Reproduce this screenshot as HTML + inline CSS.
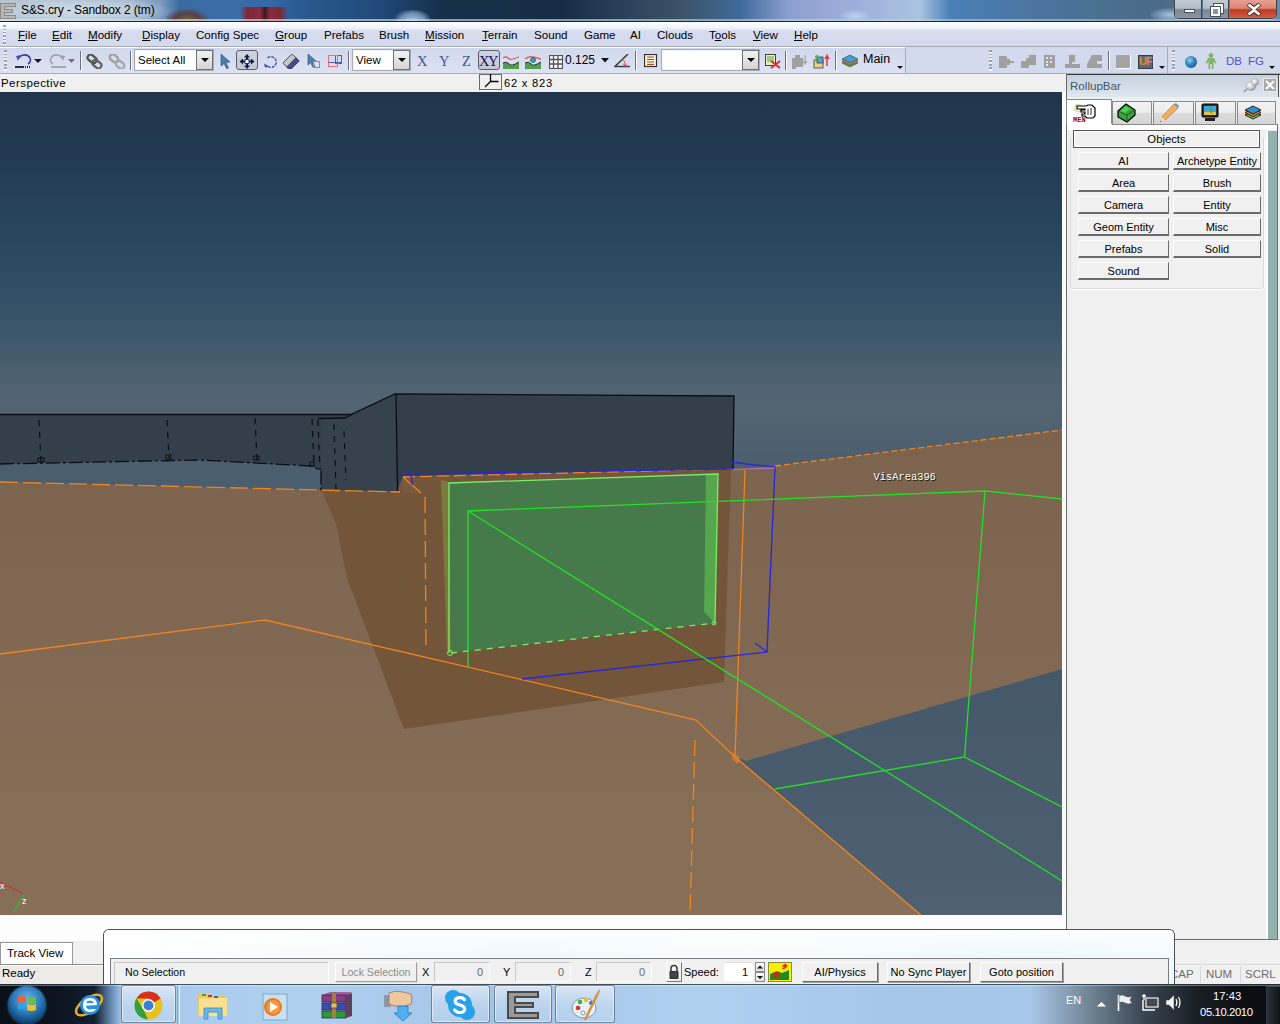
<!DOCTYPE html>
<html><head><meta charset="utf-8">
<style>
*{margin:0;padding:0;box-sizing:border-box}
html,body{width:1280px;height:1024px;overflow:hidden;background:#f0f0f0;font-family:"Liberation Sans",sans-serif;font-size:12px;color:#000}
.a{position:absolute}
#title{left:0;top:0;width:1280px;height:22px;background:linear-gradient(90deg,#b8c6d2 0,#b0c2d2 60px,#a0b6cc 130px,#7c9cc0 160px,#3a6aa0 180px,#3b6ca8 235px,#3568a4 270px,#2a5a90 300px,#1f4a78 380px,#16304a 440px,#162c44 560px,#2a4058 620px,#3c5268 680px,#3e6a9a 740px,#8ea0d0 790px,#a0b0dc 860px,#a8c4e0 920px,#4a80b8 950px,#4a78a8 1000px,#4a7090 1100px,#4a6a88 1160px,#6a8aa8 1280px)}
#menubar{left:0;top:22px;width:1280px;height:25px;background:linear-gradient(#fcfdfe 0,#f0f3f9 6px,#d6dcee 9px,#d4daed 24px);border-bottom:1px solid #a8acb8}
#menubar span{position:absolute;top:6px;font-size:11.6px;color:#000}
#menubar u{text-decoration:underline;text-underline-offset:1px}
.sep{top:4px;width:1px;height:19px;background:#6a6e80;box-shadow:1px 0 0 #fff}
.combo{top:2px;height:22px;background:#fff;border:1px solid #a8acb8;box-shadow:inset 0 0 0 1px #f4f4f4}
.combo span{position:absolute;top:4px;font-size:11.5px;color:#000}
.dd{position:absolute;right:0;top:0;width:17px;height:20px;background:linear-gradient(#f2f2f2,#d4d4d4);border:1px solid #707070}
.dd:after{content:"";position:absolute;left:4px;top:7px;border-left:4px solid transparent;border-right:4px solid transparent;border-top:4px solid #000}
.pressed{top:3px;height:20px;border:1px solid #5a5e68;border-radius:3px;background:linear-gradient(#d0d4de,#c4c8d4)}
.rb{height:18px;background:#f0f0f0;border-top:1px solid #fff;border-left:1px solid #fff;border-right:1px solid #6a6a6a;border-bottom:2px solid #6a6a6a;text-align:center;font-size:11px;line-height:16px;color:#000;white-space:nowrap;overflow:hidden}
.tabi{top:27px;height:24px;border:1px solid #8a8a8a;border-bottom:none;background:linear-gradient(#f2f2f2 0,#ececec 45%,#dcdcdc 50%,#d4d4d4 100%)}
.fld{top:962px;height:20px;border:1px solid #c8c8c8;border-right-color:#fff;border-bottom-color:#fff;background:#f0f0f0;text-align:right;padding-right:6px;font-size:11px;line-height:18px;color:#6d6d6d}
.sb{top:962px;height:20px;background:#f0f0f0;border:1px solid #fff;border-right-color:#6a6a6a;border-bottom-color:#6a6a6a;box-shadow:1px 1px 0 #a0a0a0;text-align:center;font-size:11px;line-height:18px;color:#000;white-space:nowrap}
.tbb{top:1px;height:38px;border:1px solid rgba(40,60,90,.55);border-radius:3px;background:linear-gradient(rgba(255,255,255,.55),rgba(255,255,255,.25) 50%,rgba(255,255,255,.15));box-shadow:inset 0 0 0 1px rgba(255,255,255,.5)}
.grip{width:3px;background:repeating-linear-gradient(180deg,#9096a8 0,#9096a8 1.5px,#f4f6fa 1.5px,#f4f6fa 3.5px);opacity:.85}
#toolbar{left:0;top:47px;width:1280px;height:27px;background:#d4daee;border-bottom:1px solid #a7aab8}
#persp{left:0;top:74px;width:1066px;height:18px;background:#f0f0f0}
#vp{left:0;top:92px;width:1062px;height:823px;overflow:hidden}
#below{left:0;top:915px;width:1066px;height:27px;background:#fdfdfd}
#rollup{left:1066px;top:74px;width:214px;height:867px;background:#f0f0f0}
#status{left:0;top:964px;width:1280px;height:20px;background:#ede9e6}
#taskbar{left:0;top:984px;width:1280px;height:40px;background:#abcbec}
</style></head><body>
<div id="title" class="a">
<div class="a" style="left:166px;top:9px;width:42px;height:13px;border-radius:50% 50% 0 0;background:radial-gradient(ellipse at 50% 100%,#7a7040 0,#5a4040 45%,rgba(60,90,140,0) 80%)"></div>
<div class="a" style="left:240px;top:7px;width:48px;height:15px;background:linear-gradient(90deg,rgba(140,40,60,0),#7c2838 15%,#8a2c3c 42%,#3a1828 52%,#8a2c3c 62%,#7c2838 85%,rgba(140,40,60,0))"></div>
<div class="a" style="left:395px;top:10px;width:35px;height:12px;border-radius:50% 50% 0 0;background:radial-gradient(ellipse at 50% 100%,#b0c8e8 0,#7090b8 50%,rgba(40,70,110,0) 80%)"></div>
<div class="a" style="left:840px;top:10px;width:30px;height:12px;border-radius:50%;background:radial-gradient(ellipse,#b8d4ee 0,rgba(160,176,220,0) 80%)"></div>
<div class="a" style="left:1150px;top:8px;width:40px;height:14px;border-radius:50%;background:radial-gradient(ellipse,#a8c4dc 0,rgba(74,106,136,0) 80%)"></div>
<div class="a" style="left:0;top:19px;width:1280px;height:2px;background:linear-gradient(90deg,rgba(220,230,240,.7),rgba(180,200,220,.5))"></div>
<div class="a" style="left:0;top:21px;width:1280px;height:1px;background:#1c2430"></div>
<div class="a" style="left:0;top:0;width:175px;height:20px;background:radial-gradient(ellipse 90px 14px at 85px 11px,rgba(225,232,240,.7) 0,rgba(215,225,235,.45) 60%,rgba(200,215,230,0) 100%)"></div>
<svg class="a" style="left:0;top:2px" width="17" height="18" viewBox="0 0 17 18"><path d="M0 1H16V5H5V7H13V11H5V13H16V17H0Z" fill="#8a8a88"/><path d="M1 2H15V4H4V8H12V10H4V14H15V16H1Z" fill="#b8b8b4"/></svg>
<div class="a" style="left:21px;top:3px;font-size:12px;color:#000;letter-spacing:-0.1px">S&amp;S.cry - Sandbox 2 (tm)</div>
<div class="a" style="left:1174px;top:0;width:103px;height:19px;border:1px solid #3c4450;border-top:none;border-radius:0 0 5px 5px;overflow:hidden;box-shadow:0 1px 0 rgba(255,255,255,.4)">
 <div class="a" style="left:0;top:0;width:27px;height:18px;background:linear-gradient(#c2cad4 0,#b4bec8 45%,#7c8896 55%,#8a96a4 100%);border-right:1px solid #3c4450"></div>
 <div class="a" style="left:28px;top:0;width:26px;height:18px;background:linear-gradient(#c2cad4 0,#b4bec8 45%,#7c8896 55%,#8a96a4 100%);border-right:1px solid #3c4450"></div>
 <div class="a" style="left:55px;top:0;width:48px;height:18px;background:linear-gradient(#e8a090 0,#d88878 45%,#c03820 55%,#d06040 100%)"></div>
 <div class="a" style="left:9px;top:9px;width:11px;height:4px;background:#fff;border:1px solid #4a5260"></div>
 <div class="a" style="left:39px;top:4px;width:9px;height:9px;border:2px solid #fff;outline:1px solid #4a5260"></div>
 <div class="a" style="left:36px;top:7px;width:9px;height:9px;border:2px solid #fff;outline:1px solid #4a5260;background:#8a96a4"></div>
 <svg class="a" style="left:71px;top:3px" width="16" height="13" viewBox="0 0 16 13"><path d="M2 1L8 5.5L14 1M2 12L8 7.5L14 12" stroke="#4a3030" stroke-width="4.5" fill="none"/><path d="M2.5 1.5L8 5.8L13.5 1.5M2.5 11.5L8 7.2L13.5 11.5" stroke="#fff" stroke-width="2.6" fill="none"/></svg>
</div>
</div>
<div id="menubar" class="a"><div class="a grip" style="left:3px;top:3px;height:20px"></div><span style="left:18px"><u>F</u>ile</span><span style="left:52px"><u>E</u>dit</span><span style="left:88px"><u>M</u>odify</span><span style="left:142px"><u>D</u>isplay</span><span style="left:196px">Config Spec</span><span style="left:275px"><u>G</u>roup</span><span style="left:324px">Prefabs</span><span style="left:379px">Brush</span><span style="left:425px"><u>M</u>ission</span><span style="left:482px"><u>T</u>errain</span><span style="left:534px">Sound</span><span style="left:584px">Game</span><span style="left:630px">AI</span><span style="left:657px">Clouds</span><span style="left:709px">T<u>o</u>ols</span><span style="left:753px"><u>V</u>iew</span><span style="left:794px"><u>H</u>elp</span></div>
<div id="toolbar" class="a">
<div class="a" style="left:0;top:0;width:906px;height:26px;border-top:1px solid #fff;border-right:1px solid #a8acb8;background:linear-gradient(#d2d8ec,#dde2f3)"></div>
<div class="a grip" style="left:4px;top:3px;height:21px"></div>
<div class="a grip" style="left:989px;top:3px;height:21px"></div>
<div class="a" style="left:1167px;top:0;width:1px;height:26px;background:#a8acb8"></div>
<div class="a grip" style="left:1172px;top:3px;height:21px"></div>
<!-- undo/redo -->
<svg class="a" style="left:15px;top:6px" width="62" height="15" viewBox="0 0 62 15">
 <path d="M4 5 A6 5 0 1 1 13 11" stroke="#3838a0" stroke-width="1.6" fill="none" stroke-dasharray="20 1.5"/>
 <path d="M1 3 L6 2 L3 8Z" fill="#4a4ab8"/>
 <rect x="0" y="13" width="9" height="2" fill="#303030"/><rect x="10" y="13" width="1" height="2" fill="#303030"/><rect x="12" y="13" width="1" height="2" fill="#303030"/><rect x="14" y="13" width="1" height="2" fill="#303030"/>
 <path d="M19 6h8l-4 4z" fill="#1a1a1a"/>
 <path d="M47 5 A6 5 0 1 0 38 11" stroke="#a0a0a8" stroke-width="1.6" fill="none"/>
 <path d="M50 3 L45 2 L48 8Z" fill="#a0a0a8"/>
 <rect x="36" y="13" width="15" height="2" fill="#a8a8a8"/>
 <path d="M53 6h7l-3.5 4z" fill="#707078"/>
</svg>
<div class="a sep" style="left:80px"></div>
<svg class="a" style="left:86px;top:7px" width="42" height="15" viewBox="0 0 42 15">
 <g transform="rotate(40 8.5 7.5)"><rect x="0" y="4" width="10" height="6" rx="3" stroke="#505050" stroke-width="2.2" fill="none"/><rect x="7" y="5" width="10" height="6" rx="3" stroke="#606060" stroke-width="2.2" fill="none"/></g>
 <g transform="rotate(40 31 7.5)"><rect x="22" y="4" width="9" height="6" rx="3" stroke="#a0a0a0" stroke-width="2.4" fill="none"/><rect x="31" y="5" width="9" height="6" rx="3" stroke="#a8a8a8" stroke-width="2.4" fill="none"/></g>
</svg>
<div class="a sep" style="left:130px"></div>
<div class="a combo" style="left:134px;width:80px"><span style="left:3px">Select All</span><div class="dd"></div></div>
<svg class="a" style="left:220px;top:7px" width="124" height="15" viewBox="0 0 124 15">
 <path d="M1 0L10 8L6 8.5L8.5 14L6.5 14.5L4.2 9.5L1 12Z" fill="#4a80b0" stroke="#2a4a70" stroke-width="0.6"/>
 <path d="M47.5 4A5.3 5.3 0 1 1 46.5 11" stroke="#4050b0" stroke-width="1.4" fill="none" stroke-dasharray="3 1"/>
 <path d="M44 9.5L45 13.5L49 12.5Z" fill="#4050b0"/>
 <g transform="rotate(-45 71 8)"><rect x="64.5" y="3" width="13" height="10" rx="1" fill="#c8c8cc" stroke="#404060" stroke-width="0.9"/><rect x="64.5" y="8.5" width="13" height="4.5" fill="#4a4a8a" stroke="#404060" stroke-width="0.9"/></g>
 <path d="M88 0L96 7L92.5 7.5L95 13L93 13.5L90.8 8.5L88 11Z" fill="#4a80b0" stroke="#2a4a70" stroke-width="0.6"/>
 <rect x="93.5" y="7.5" width="6" height="6" stroke="#f06060" stroke-width="1" fill="none"/>
 <rect x="115.5" y="1.5" width="6" height="8" stroke="#5060a8" stroke-width="1" fill="none"/>
 <rect x="108.5" y="1.5" width="9" height="11" stroke="#f07070" stroke-width="1" fill="none"/>
 <path d="M108.5 8.5H121.5" stroke="#5060a8" stroke-width="1"/>
</svg>
<div class="a pressed" style="left:236px;width:22px"></div>
<svg class="a" style="left:239px;top:7px" width="16" height="15" viewBox="0 0 16 15">
 <path d="M8 0L11 3.5H9V6.5H12V4.5L15.5 7.5L12 10.5V8.5H9V11.5H11L8 15L5 11.5H7V8.5H4V10.5L0.5 7.5L4 4.5V6.5H7V3.5H5Z" fill="#101850"/>
 <rect x="6" y="5.5" width="4" height="4" fill="#fff" stroke="#101850" stroke-width="0.8"/>
</svg>
<div class="a sep" style="left:348px"></div>
<div class="a combo" style="left:352px;width:59px"><span style="left:3px">View</span><div class="dd"></div></div>
<div class="a" style="left:417px;top:6px;font-family:'Liberation Serif',serif;font-size:14.5px;color:#4a5494">X</div>
<div class="a" style="left:439px;top:6px;font-family:'Liberation Serif',serif;font-size:14.5px;color:#4a5494">Y</div>
<div class="a" style="left:462px;top:6px;font-family:'Liberation Serif',serif;font-size:14.5px;color:#4a5494">Z</div>
<div class="a pressed" style="left:478px;width:22px"></div>
<div class="a" style="left:479px;top:6px;font-family:'Liberation Serif',serif;font-size:14.5px;color:#101070;letter-spacing:-1.5px">XY</div>
<svg class="a" style="left:503px;top:9px" width="40" height="14" viewBox="0 0 40 14">
 <path d="M0 2Q3 0 5 2T10 3T16 1" stroke="#e06060" stroke-width="1.3" fill="none"/>
 <path d="M0 7Q4 5 6 8T16 6V13H0Z" fill="#50a050"/><path d="M0 7Q4 5 6 8T16 6" stroke="#203020" stroke-width="1" fill="none"/>
 <path d="M22 3Q26 0 30 1T38 3" stroke="#e06060" stroke-width="1.3" fill="none"/>
 <circle cx="30" cy="4" r="2.5" fill="#40a0c0" stroke="#204050" stroke-width="0.6"/>
 <path d="M22 7Q26 5 28 8T38 6V13H22Z" fill="#50a050"/><path d="M22 7Q26 5 28 8T38 6" stroke="#203020" stroke-width="1" fill="none"/>
</svg>
<svg class="a" style="left:549px;top:8px" width="14" height="14" viewBox="0 0 14 14">
 <rect x="0.5" y="0.5" width="13" height="13" fill="#fff" stroke="#505058" stroke-width="1.2"/>
 <path d="M4.5 0V14M9 0V14M0 4.5H14M0 9H14" stroke="#505058" stroke-width="1.3"/>
</svg>
<div class="a" style="left:565px;top:6px;font-size:12px;color:#000">0.125</div>
<svg class="a tri" style="left:601px;top:11px" width="8" height="5"><path d="M0 0H8L4 4.5Z" fill="#111"/></svg>
<svg class="a" style="left:614px;top:7px" width="17" height="14" viewBox="0 0 17 14">
 <path d="M14 0L1 12.5H16" stroke="#404040" stroke-width="1.6" fill="none"/>
 <path d="M8 5Q11 6 11 12" stroke="#e05050" stroke-width="1" fill="none"/><path d="M9 9.5L11 12L13 9.5" stroke="#e05050" stroke-width="1" fill="none"/>
</svg>
<div class="a sep" style="left:635px"></div>
<svg class="a" style="left:644px;top:7px" width="14" height="14" viewBox="0 0 14 14">
 <rect x="0.5" y="0.5" width="12" height="12" fill="#fff8d8" stroke="#303030" stroke-width="1.2"/>
 <path d="M3 3H10M3 5.5H10M3 8H10M3 10.5H10" stroke="#c04020" stroke-width="1.2"/>
</svg>
<div class="a combo" style="left:661px;width:99px"><div class="dd"></div></div>
<svg class="a" style="left:765px;top:7px" width="16" height="15" viewBox="0 0 16 15">
 <rect x="0.5" y="0.5" width="10" height="11" fill="#e8f0c8" stroke="#404040"/>
 <path d="M2 3H9M2 5H9M2 7H9" stroke="#60a040" stroke-width="1"/>
 <path d="M6 7L15 14M15 7L6 14" stroke="#e03030" stroke-width="2"/>
</svg>
<div class="a sep" style="left:785px"></div>
<svg class="a" style="left:792px;top:7px" width="40" height="15" viewBox="0 0 40 15">
 <path d="M0 4H3V1H8V4H11V13H4V15H0Z" fill="#a0a0a0"/><path d="M13 1V9M11 7L13 10L15 7" stroke="#a8a8a8" stroke-width="1.3" fill="none"/>
 <rect x="22" y="6" width="9" height="8" fill="#e8d080" stroke="#404040" stroke-width="0.8"/>
 <rect x="25" y="3" width="6" height="6" fill="#50a0d0" stroke="#404040" stroke-width="0.8"/><circle cx="25" cy="3" r="2" fill="#50b050"/>
 <path d="M35 12V2M33 5L35 1.5L37 5" stroke="#e03030" stroke-width="1.4" fill="none"/>
</svg>
<div class="a sep" style="left:835px"></div>
<svg class="a" style="left:841px;top:6px" width="18" height="16" viewBox="0 0 18 16">
 <path d="M1 10L9 6L17 10L9 14Z" fill="#50a050" stroke="#305030" stroke-width="0.6"/>
 <path d="M1 8L9 4L17 8L9 12Z" fill="#e08040" stroke="#704020" stroke-width="0.6"/>
 <path d="M1 6L9 2L17 6L9 10Z" fill="#40a0d0" stroke="#204060" stroke-width="0.6"/>
</svg>
<div class="a" style="left:863px;top:5px;font-size:12.5px;color:#000">Main</div>
<svg class="a" style="left:897px;top:19px" width="6" height="4"><path d="M0 0H6L3 3Z" fill="#111"/></svg>
<svg class="a" style="left:999px;top:7px" width="105" height="15" viewBox="0 0 105 15">
 <g fill="#a0a0a0">
 <path d="M0 2H8V5H11V7H15V9H11V11H8V14H0Z"/>
 <path d="M22 7H27V4H30V1H37V11H30V14H22Z"/>
 <path d="M45 1H56V14H45Z"/>
 <path d="M70 1H76V8H73V10H81V14H66V10H70Z"/>
 <path d="M93 1H103V7H98V10H103V14H88V10Z"/>
 </g>
 <g fill="#e0e4f0"><rect x="47" y="3" width="2" height="2"/><rect x="51" y="3" width="2" height="2"/><rect x="47" y="7" width="2" height="2"/><rect x="47" y="10" width="2" height="2"/><rect x="51" y="7" width="2" height="2"/></g>
</svg>
<div class="a sep" style="left:1108px"></div>
<div class="a" style="left:1116px;top:8px;width:15px;height:14px;background:#a4a4a4;border-right:1px solid #fff;border-bottom:1px solid #fff"></div>
<div class="a" style="left:1138px;top:8px;width:15px;height:14px;background:#5a6a78;border:1px solid #304050"><span class="a" style="left:0;top:-1px;font-size:11px;font-weight:bold;color:#f08030;letter-spacing:-1px">UF</span></div>
<svg class="a" style="left:1159px;top:19px" width="6" height="4"><path d="M0 0H6L3 3Z" fill="#111"/></svg>
<svg class="a" style="left:1184px;top:8px" width="14" height="14" viewBox="0 0 14 14"><defs><radialGradient id="bs" cx="0.4" cy="0.35" r="0.7"><stop offset="0" stop-color="#9ad0f0"/><stop offset="0.5" stop-color="#3a8ac0"/><stop offset="1" stop-color="#1a5a90"/></radialGradient></defs><circle cx="7" cy="7" r="6" fill="url(#bs)"/></svg>
<svg class="a" style="left:1205px;top:6px" width="12" height="17" viewBox="0 0 12 17"><circle cx="6" cy="2.5" r="2.3" fill="#7cb060"/><path d="M3 5H9L11.5 10L10 10.5L8.5 8V16H6.8V11H5.2V16H3.5V8L2 10.5L0.5 10Z" fill="#80b468"/></svg>
<div class="a" style="left:1226px;top:8px;font-size:11.5px;color:#5050d0">DB</div>
<div class="a" style="left:1248px;top:8px;font-size:11.5px;color:#5050d0">FG</div>
<svg class="a" style="left:1269px;top:19px" width="6" height="4"><path d="M0 0H6L3 3Z" fill="#111"/></svg>
</div>
<div id="persp" class="a">
<div class="a" style="left:1px;top:3px;font-size:11.5px;letter-spacing:0.45px;color:#000">Perspective</div>
<div class="a" style="left:479px;top:0;width:23px;height:16px;border:1px solid #6a6a6a;background:#f0f0f0"></div>
<svg class="a" style="left:480px;top:0" width="22" height="16" viewBox="0 0 22 16"><path d="M10.5 0V7.5H18.5M10.5 7.5L5 13" stroke="#000" stroke-width="1.3" fill="none"/></svg>
<div class="a" style="left:504px;top:3px;font-size:11.2px;letter-spacing:0.75px;color:#000">62 x 823</div>
</div>
<div id="vp" class="a">
<svg width="1062" height="823" viewBox="0 92 1062 823">
<defs>
<linearGradient id="sky" x1="0" y1="92" x2="0" y2="500" gradientUnits="userSpaceOnUse">
<stop offset="0" stop-color="#20354c"/>
<stop offset="0.14" stop-color="#223a51"/>
<stop offset="0.41" stop-color="#2b4960"/>
<stop offset="0.58" stop-color="#3b566a"/>
<stop offset="0.68" stop-color="#4a5f6f"/>
<stop offset="0.76" stop-color="#536572"/>
<stop offset="0.9" stop-color="#4d5f6e"/>
<stop offset="1" stop-color="#4a5d6d"/>
</linearGradient>
<linearGradient id="gnd" x1="0" y1="430" x2="0" y2="915" gradientUnits="userSpaceOnUse">
<stop offset="0" stop-color="#7b634d"/>
<stop offset="0.5" stop-color="#816953"/>
<stop offset="1" stop-color="#887058"/>
</linearGradient>
<linearGradient id="flr" x1="0" y1="669" x2="0" y2="915" gradientUnits="userSpaceOnUse">
<stop offset="0" stop-color="#455869"/>
<stop offset="1" stop-color="#4e6072"/>
</linearGradient>
</defs>
<rect x="0" y="92" width="1062" height="823" fill="url(#sky)"/>
<!-- ground -->
<polygon points="0,460 200,459 312,466 321,471 321,491 0,482" fill="#4b5e6f"/>
<polygon points="0,414 351,414.5 395,394 734,396 733,469 403,476 397,491 321,491 321,471 312,466 200,460 0,464" fill="#333f4a"/>
<polygon points="321,418 345,418 352,414.5 395,394 397,491 321,491" fill="#36434e"/>
<polygon points="0,482 400,492 403,477 733,469 775,466 1062,430 1062,915 0,915" fill="url(#gnd)"/>
<polygon points="322,491 397,492 403,477 731,469 724,682 404,729 347,578 336,524" fill="#73553a"/>
<polygon points="403,477 421,493 403,493" fill="#7a5a3e"/>
<polygon points="441,480 449,482 451,653 447,650" fill="#7a7a3c"/>
<polygon points="449,483 718,474 715,623 451,653" fill="#477a4b"/>
<polygon points="706,475 718,474 715,623 704,612" fill="#55a64c"/>
<polygon points="746,761 1062,669 1062,915 921,915 735,756" fill="url(#flr)"/>
<!-- wall lines -->
<g stroke="#0a0f14" stroke-width="1.3" fill="none">
<polyline points="0,414.5 351,414.5 395,394 734,396 733,469"/>
<polyline points="318,418.5 345,418 352,414.5"/>
<line x1="396" y1="394" x2="397.5" y2="491"/>
<polyline points="0,464 200,460 312,466 321,471 321,491" stroke-dasharray="14 3 3 3"/>
</g>
<g stroke="#0a0f14" stroke-width="1.2" fill="none" stroke-dasharray="6 6">
<line x1="39" y1="420" x2="41" y2="462"/>
<line x1="167" y1="420" x2="169" y2="458"/>
<line x1="255" y1="418" x2="257" y2="460"/>
<line x1="312" y1="419" x2="314" y2="466"/>
<line x1="318" y1="420" x2="320" y2="470"/>
<line x1="334" y1="424" x2="336" y2="490"/>
<line x1="344" y1="431" x2="346" y2="480"/>
</g>
<!-- orange lines -->
<g stroke="#f0841e" stroke-width="1.3" fill="none">
<polyline points="0,482 400,492" stroke-dasharray="18 5"/>
<polyline points="403,477 421,493"/>
<polyline points="403,477 733,469" stroke-dasharray="12 5"/>
<polyline points="775,466 1062,430" stroke-dasharray="6 3"/>
<polyline points="0,654 265,620 696,720 735,757 921,915"/>
<line x1="425" y1="497" x2="426" y2="650" stroke-dasharray="16 6"/>
<line x1="745" y1="470" x2="735" y2="757"/>
<line x1="695" y1="740" x2="690" y2="915" stroke-dasharray="16 6"/>
</g>
<!-- blue -->
<g stroke="#2828d8" stroke-width="1.3" fill="none">
<polyline points="405,474 733,469"/><polyline points="731,462 755,465 775,467 767,652 522,679"/>
<polyline points="755,643 767,652"/>
<polyline points="403,471 412,477 412,485"/>
</g>
<!-- green -->
<g stroke="#77ee66" stroke-width="1.3" fill="none">
<polyline points="449,653 449,483 718,474 715,623"/>
<polyline points="451,653 715,623" stroke-dasharray="6 6"/>
</g>
<g stroke="#22e022" stroke-width="1.3" fill="none">
<polyline points="468,667 468,511 985,491 1062,499"/>
<line x1="468" y1="511" x2="1062" y2="881"/>
<polyline points="985,491 964.5,757 775,789"/>
<line x1="964.5" y1="757" x2="1062" y2="807"/>
</g>
<line x1="733" y1="469.5" x2="775" y2="468" stroke="#c070c0" stroke-width="1"/>
<polygon points="731,752 740,757 738,764 733,760" fill="#e0802a" opacity="0.8"/>
<g fill="none" stroke="#0a0f14" stroke-width="1"><rect x="38" y="458" width="6" height="4"/><rect x="166" y="455" width="5" height="4"/><rect x="254" y="456" width="5" height="4"/><rect x="310" y="462" width="4" height="4"/></g>
<circle cx="450" cy="653" r="2.5" stroke="#77ee66" fill="none" stroke-width="1"/>
<circle cx="714" cy="623" r="2" stroke="#77ee66" fill="none" stroke-width="1"/>
<text x="874.5" y="481" font-family="Liberation Mono" font-size="10.4" fill="#000" opacity="0.75">VisArea396</text>
<text x="873.5" y="480" font-family="Liberation Mono" font-size="10.4" fill="#fff">VisArea396</text>
<!-- axis -->
<line x1="0" y1="882" x2="24" y2="894" stroke="#e02020" stroke-width="1"/>
<line x1="24" y1="894" x2="14" y2="912" stroke="#30c030" stroke-width="1.2"/>
<text x="0" y="889" font-family="Liberation Sans" font-size="9" fill="#fff">x</text>
<text x="22" y="904" font-family="Liberation Sans" font-size="9" fill="#fff">z</text>
</svg>
</div>
<div id="below" class="a"></div>
<div class="a" style="left:1062px;top:92px;width:4px;height:850px;background:#fbfcfd"></div>
<div id="rollup" class="a">
<div class="a" style="left:0;top:0;width:214px;height:1px;background:#3a3a3a"></div>
<div class="a" style="left:0;top:0;width:1px;height:855px;background:#6a6a6a"></div>
<div class="a" style="left:1px;top:1px;width:212px;height:22px;background:linear-gradient(#c4d2e0,#d4dee8 60%,#dfe6ee)"></div>
<div class="a" style="left:212px;top:1px;width:1px;height:22px;background:#505050"></div>
<div class="a" style="left:4px;top:5px;font-size:11.6px;color:#44546a">RollupBar</div>
<svg class="a" style="left:177px;top:4px" width="17" height="15" viewBox="0 0 17 15"><defs><radialGradient id="pg" cx="0.35" cy="0.35" r="0.7"><stop offset="0" stop-color="#fff"/><stop offset="0.6" stop-color="#d0d0d0"/><stop offset="1" stop-color="#909090"/></radialGradient></defs><path d="M1 14L5 10" stroke="#909098" stroke-width="1.5"/><ellipse cx="8" cy="8" rx="5" ry="4.5" fill="url(#pg)" stroke="#a0a0a0" stroke-width="0.5"/><circle cx="12" cy="4" r="3.5" fill="url(#pg)" stroke="#a0a0a0" stroke-width="0.5"/></svg>
<div class="a" style="left:197px;top:4px;width:14px;height:14px;background:#a8a8a8;border:1px solid #e8e8e8"></div>
<svg class="a" style="left:199px;top:6px" width="10" height="10" viewBox="0 0 10 10"><path d="M1 1L9 9M9 1L1 9" stroke="#fff" stroke-width="2.2"/></svg>
<div class="a" style="left:1px;top:23px;width:212px;height:2px;background:#eceef0"></div>
<!-- tabs -->
<div class="a tabi" style="left:46px;width:40px"></div>
<div class="a tabi" style="left:87px;width:41px"></div>
<div class="a tabi" style="left:129px;width:41px"></div>
<div class="a tabi" style="left:171px;width:39px"></div>
<div class="a" style="left:0;top:25px;width:46px;height:26px;background:#fff;border:1px solid #8a8a8a;border-bottom:none"></div>
<div class="a" style="left:0;top:50px;width:212px;height:816px;border-right:1px solid #6a6a6a;border-bottom:1px solid #6a6a6a;border-top:1px solid #8a8a8a"></div>
<div class="a" style="left:1px;top:51px;width:210px;height:5px;background:#fff"></div>
<div class="a" style="left:1px;top:50px;width:45px;height:2px;background:#fff"></div>
<!-- tab icons -->
<svg class="a" style="left:7px;top:29px" width="24" height="20" viewBox="0 0 24 20">
 <circle cx="5" cy="5" r="3.5" fill="none" stroke="#d8e0a0" stroke-width="1.6"/>
 <path d="M4 3H13L15 2H19L22 5V13L20 15H14L12 13H9V11H12V9H8V7H12V6H4Z" fill="#fff" stroke="#000" stroke-width="1.2"/>
 <path d="M15 6V12M18 5V12" stroke="#000" stroke-width="0.8"/>
 <text x="0" y="19" font-family="Liberation Mono" font-weight="bold" font-size="7" fill="#8a1010">MEN</text>
</svg>
<svg class="a" style="left:51px;top:29px" width="20" height="20" viewBox="0 0 20 20">
 <path d="M1 8L9 1L18 7L18 12L10 19L1 14Z" fill="#3aa040" stroke="#000" stroke-width="1.2"/>
 <path d="M1 8L10 12L18 7M10 12V19" stroke="#1a5020" stroke-width="0.8" fill="none"/>
 <path d="M3 8L9 3L13 6L8 10Z" fill="#50d050"/>
</svg>
<svg class="a" style="left:92px;top:28px" width="22" height="21" viewBox="0 0 22 21">
 <path d="M4 15L16 2L20 6L7 18Z" fill="#f0b060" stroke="#c07830" stroke-width="0.8"/>
 <path d="M16 2L20 6L21 4L18 1Z" fill="#60a0d0"/>
 <path d="M4 15L7 18L2 20Z" fill="#f8e0b0"/><path d="M2 20L3 18.5L3.5 19.5Z" fill="#203080"/>
</svg>
<svg class="a" style="left:135px;top:29px" width="19" height="19" viewBox="0 0 19 19">
 <rect x="1" y="1" width="16" height="13" rx="1" fill="#303030" stroke="#000"/>
 <rect x="3" y="3" width="12" height="9" fill="#40a8e0"/><path d="M3 9H15V12H3Z" fill="#e8c040"/><path d="M9 4Q11 6 10 10" stroke="#50a030" stroke-width="1.5" fill="none"/>
 <rect x="4" y="15" width="10" height="3" fill="#202020"/>
</svg>
<svg class="a" style="left:178px;top:31px" width="18" height="16" viewBox="0 0 18 16">
 <path d="M1 10L9 6L17 10L9 14Z" fill="#60c050" stroke="#000" stroke-width="0.8"/>
 <path d="M1 7.5L9 3.5L17 7.5L9 11.5Z" fill="#f08030" stroke="#000" stroke-width="0.8"/>
 <path d="M1 5L9 1L17 5L9 9Z" fill="#3090d0" stroke="#000" stroke-width="0.8"/>
</svg>
<!-- content -->
<div class="a" style="left:7px;top:56px;width:187px;height:18px;border:1px solid #555;box-shadow:inset 1px 1px 0 #fff,inset -1px -1px 0 #fff;background:#f0f0f0;text-align:center;font-size:11.3px;line-height:16px">Objects</div>
<div class="a" style="left:4px;top:64px;width:194px;height:151px;border:1px solid #d8dadc;border-top:none;border-radius:0 0 4px 4px;box-shadow:1px 1px 0 #fff"></div>
<div class="a rb" style="left:12px;top:78px;width:91px">AI</div><div class="a rb" style="left:107px;top:78px;width:88px">Archetype Entity</div><div class="a rb" style="left:12px;top:100px;width:91px">Area</div><div class="a rb" style="left:107px;top:100px;width:88px">Brush</div><div class="a rb" style="left:12px;top:122px;width:91px">Camera</div><div class="a rb" style="left:107px;top:122px;width:88px">Entity</div><div class="a rb" style="left:12px;top:144px;width:91px">Geom Entity</div><div class="a rb" style="left:107px;top:144px;width:88px">Misc</div><div class="a rb" style="left:12px;top:166px;width:91px">Prefabs</div><div class="a rb" style="left:107px;top:166px;width:88px">Solid</div><div class="a rb" style="left:12px;top:188px;width:91px">Sound</div>
<div class="a" style="left:200px;top:57px;width:11px;height:808px;border-left:2px solid #fff;background:#93b1b1"></div>
</div>
<div id="status" class="a">
<div class="a" style="left:2px;top:3px;font-size:11.5px;color:#000">Ready</div>
<div class="a" style="left:1174px;top:0;width:106px;height:20px;background:#f0f0f0;border-top:1px solid #dadada"></div>
<div class="a" style="left:1200px;top:2px;width:1px;height:17px;background:#d8d8d8"></div>
<div class="a" style="left:1240px;top:2px;width:1px;height:17px;background:#d8d8d8"></div>
<div class="a" style="left:1170px;top:4px;font-size:11.5px;color:#6d6d6d">CAP</div>
<div class="a" style="left:1206px;top:4px;font-size:11.5px;color:#6d6d6d">NUM</div>
<div class="a" style="left:1245px;top:4px;font-size:11.5px;color:#6d6d6d">SCRL</div>
</div>
<div class="a" style="left:0;top:941px;width:1174px;height:23px;background:#f0f0f0"></div>
<div class="a" style="left:0;top:942px;width:73px;height:23px;background:#fff;border:1px solid #9a9a9a;border-bottom:none"></div>
<div class="a" style="left:7px;top:947px;font-size:11.5px;color:#000">Track View</div>
<div class="a" style="left:0;top:964px;width:104px;height:1px;background:#8a8a8a"></div><div class="a" style="left:0;top:965px;width:104px;height:1px;background:#fff"></div>
<!-- floating window -->
<div class="a" style="left:103px;top:929px;width:72px;height:56px"></div>
<div class="a" style="left:103px;top:929px;width:1072px;height:60px;border:1px solid #4a5058;border-bottom:none;border-radius:6px 6px 0 0;background:linear-gradient(90deg,rgba(255,255,255,.96) 0,#f4fafc 20%,#eef8fa 40%,#f6fbfc 60%,#eaf8fa 85%,#f0fafb 100%);overflow:hidden">
 <div class="a" style="left:0;top:0;width:1072px;height:30px;background:linear-gradient(rgba(255,255,255,.9),rgba(255,255,255,0))"></div>
 <div class="a" style="left:6px;top:28px;width:1059px;height:30px;border:1px solid #7a7e84;border-bottom:none;background:#f0f0f0"></div>
</div>
<div class="a" style="left:114px;top:962px;width:215px;height:22px;border:1px solid #c8c8c8;border-right-color:#fff;border-bottom:none;background:#f0f0f0"></div>
<div class="a" style="left:125px;top:966px;font-size:10.6px;color:#000">No Selection</div>
<div class="a" style="left:335px;top:962px;width:82px;height:20px;border:1px solid #fff;border-right-color:#a0a0a0;border-bottom-color:#a0a0a0;box-shadow:1px 1px 0 #e0e0e0;background:#f0f0f0;text-align:center;font-size:10.6px;line-height:18px;color:#8d8d8d">Lock Selection</div>
<div class="a" style="left:422px;top:966px;font-size:11px">X</div>
<div class="a fld" style="left:434px;width:56px">0</div>
<div class="a" style="left:503px;top:966px;font-size:11px">Y</div>
<div class="a fld" style="left:515px;width:56px">0</div>
<div class="a" style="left:585px;top:966px;font-size:11px">Z</div>
<div class="a fld" style="left:596px;width:56px">0</div>
<div class="a" style="left:666px;top:962px;width:16px;height:20px;border:1px solid #fff;border-right-color:#7a7a7a;border-bottom-color:#7a7a7a;background:#f0f0f0"></div>
<svg class="a" style="left:668px;top:964px" width="12" height="16" viewBox="0 0 12 16"><path d="M3 7V4.5A3 3 0 0 1 9 4.5V7" stroke="#404040" stroke-width="1.6" fill="none"/><rect x="1.5" y="7" width="9" height="8" rx="1" fill="#303030"/><path d="M3 9H9M3 11H9M3 13H9" stroke="#707070" stroke-width="0.7"/></svg>
<div class="a" style="left:684px;top:966px;font-size:11px">Speed:</div>
<div class="a" style="left:723px;top:962px;width:31px;height:20px;background:#fff;border:1px solid #f0f0f0;border-top-color:#e0e0e0;text-align:right;padding-right:5px;font-size:11px;line-height:18px">1</div>
<div class="a" style="left:755px;top:962px;width:10px;height:10px;border:1px solid #8a8a8a;background:linear-gradient(#fafafa,#e0e0e0)"></div>
<div class="a" style="left:755px;top:972px;width:10px;height:10px;border:1px solid #8a8a8a;background:linear-gradient(#fafafa,#e0e0e0)"></div>
<svg class="a" style="left:757px;top:965px" width="6" height="15"><path d="M0 3.5L3 0.5L6 3.5ZM0 11L3 14L6 11Z" fill="#000"/></svg>
<svg class="a" style="left:768px;top:962px" width="24" height="20" viewBox="0 0 24 20"><rect x="0.5" y="0.5" width="23" height="19" fill="#f8f000" stroke="#8a8a40"/><path d="M2 12L9 9L14 11L21 8V18H2Z" fill="#208a20"/><circle cx="8" cy="13" r="3" fill="#e02020"/><path d="M14 4L17 1.5L20 4L17 6.5Z" fill="#e03020"/><path d="M14 6L17 7" stroke="#e03020" stroke-width="1"/></svg>
<div class="a sb" style="left:802px;width:76px">AI/Physics</div>
<div class="a sb" style="left:887px;width:83px">No Sync Player</div>
<div class="a sb" style="left:980px;width:83px">Goto position</div>

<div id="taskbar" class="a">
<div class="a" style="left:0;top:0;width:1280px;height:40px;background:linear-gradient(90deg,#0a1018 0,#0c1420 60px,#142030 95px,#6890b8 112px,#a8c8ea 122px,#b0d0f0 300px,#a4c4e6 500px,#b0d0f0 700px,#a6c6e8 900px,#a8c8ea 1030px,#92acc6 1055px,#6a7e8e 1095px,#3a4450 1145px,#1a2026 1195px,#0c1014 1240px,#0a0c10 1280px)"></div>
<div class="a" style="left:0;top:0;width:1280px;height:1px;background:rgba(40,50,60,.8)"></div>
<div class="a" style="left:0;top:1px;width:1280px;height:1px;background:rgba(255,255,255,.35)"></div>
<!-- start orb -->
<div class="a" style="left:8px;top:2px;width:38px;height:38px;border-radius:50%;background:radial-gradient(circle at 50% 35%,#6ab8e8 0,#2a78b8 45%,#0a3a68 80%,#062040 100%);box-shadow:0 0 2px #4a90c8"></div>
<svg class="a" style="left:17px;top:10px" width="20" height="20" viewBox="0 0 20 20"><path d="M1 3Q5 1 9 3V9Q5 7 1 9Z" fill="#f06030"/><path d="M10 3Q14 5 19 3V9Q14 11 10 9Z" fill="#70c040"/><path d="M1 10Q5 8 9 10V16Q5 14 1 16Z" fill="#30a0e8"/><path d="M10 10Q14 12 19 10V16Q14 18 10 16Z" fill="#f0c020"/></svg>
<!-- IE -->
<svg class="a" style="left:72px;top:4px" width="34" height="33" viewBox="0 0 34 33"><ellipse cx="17" cy="17" rx="15" ry="7" transform="rotate(-35 17 17)" fill="none" stroke="#e0b030" stroke-width="2.5"/><circle cx="18" cy="17" r="10" fill="#2a90e0"/><path d="M11 17H25Q25 10 18 10Q11 10 11 17Q11 24 18 24Q23 24 24 21H19Q18 22 16 21Q14 20 14 18H25" fill="#fff"/><path d="M14 15H22Q21 12.5 18 12.5Q15 12.5 14 15Z" fill="#2a90e0"/></svg>
<!-- buttons -->
<div class="a tbb" style="left:121px;width:55px"></div>
<div class="a" style="left:177px;top:2px;width:3px;height:38px;border-left:1px solid #8aa8c8;border-right:1px solid #e8f4ff"></div>
<svg class="a" style="left:133px;top:6px" width="31" height="31" viewBox="0 0 31 31"><circle cx="15.5" cy="15.5" r="14" fill="#e8c020"/><path d="M15.5 1.5A14 14 0 0 1 27.6 8.5L15.5 15.5Z" fill="#d83020"/><path d="M3.4 8.5A14 14 0 0 1 15.5 1.5L27.6 8.5H15.5Z" fill="#d83020"/><path d="M3.4 8.5L10 20A14 14 0 0 1 3.4 8.5Z" fill="#30a040"/><path d="M1.5 15.5A14 14 0 0 1 3.4 8.5L11 21L15 29.5A14 14 0 0 1 1.5 15.5Z" fill="#30a040"/><circle cx="15.5" cy="15.5" r="6.5" fill="#fff"/><circle cx="15.5" cy="15.5" r="5" fill="#3a80d0"/></svg>
<svg class="a" style="left:196px;top:6px" width="34" height="30" viewBox="0 0 34 30"><path d="M2 3H12L14 5H30V26H2Z" fill="#e8c860"/><rect x="3" y="8" width="28" height="18" fill="#f8e090"/><path d="M8 18H26V29H22V22H12V29H8Z" fill="#6ab8e8" stroke="#3a88c0" stroke-width="0.8"/><rect x="6" y="4" width="4" height="2" fill="#40a040"/><rect x="12" y="5" width="4" height="2" fill="#d03030"/><rect x="18" y="6" width="4" height="2" fill="#3070d0"/></svg>
<svg class="a" style="left:260px;top:9px" width="30" height="28" viewBox="0 0 30 28"><rect x="3" y="1" width="24" height="26" fill="#c8e0f0" stroke="#7aa8c8"/><circle cx="13" cy="14" r="9" fill="#f07820"/><circle cx="13" cy="14" r="7" fill="#f89838"/><path d="M10 9L18 14L10 19Z" fill="#fff"/></svg>
<svg class="a" style="left:320px;top:8px" width="34" height="30" viewBox="0 0 34 30"><path d="M2 3L10 0H32L26 5H2Z" fill="#a060a0"/><rect x="2" y="3" width="24" height="7" fill="#8a3a8a" stroke="#303030" stroke-width="0.8"/><rect x="2" y="11" width="24" height="7" fill="#3a4ab8" stroke="#303030" stroke-width="0.8"/><rect x="2" y="19" width="24" height="7" fill="#2a9a3a" stroke="#303030" stroke-width="0.8"/><path d="M26 3L32 1V24L26 26Z" fill="#604060"/><rect x="12" y="2" width="4" height="24" fill="#a08040"/><rect x="11" y="11" width="6" height="5" fill="#d8c060" stroke="#303030" stroke-width="0.6"/></svg>
<svg class="a" style="left:383px;top:5px" width="32" height="33" viewBox="0 0 32 33"><rect x="1" y="6" width="7" height="12" rx="1" fill="#8a98a8"/><path d="M6 4Q12 1 20 3L28 5Q30 9 28 15Q20 19 12 17L6 15Z" fill="#f0c8a0" stroke="#a07050" stroke-width="0.8"/><path d="M15 17H25V24H29L20 32L11 24H15Z" fill="#50b0f0" stroke="#2a7ab0" stroke-width="0.8"/></svg>
<div class="a tbb" style="left:431px;width:59px"></div>
<div class="a tbb" style="left:494px;width:58px"></div>
<div class="a tbb" style="left:555px;width:60px"></div>
<svg class="a" style="left:444px;top:5px" width="32" height="32" viewBox="0 0 32 32"><circle cx="9" cy="9" r="8" fill="#28a0e8"/><circle cx="23" cy="23" r="8" fill="#28a0e8"/><circle cx="16" cy="16" r="12" fill="#28a0e8"/><path d="M20.5 10.5Q18.5 8.5 15.5 8.7Q11 9 11.2 12.5Q11.5 15 16 16Q20.5 17 20.7 19.8Q20.8 23.5 16 23.5Q12.5 23.5 10.5 21" stroke="#fff" stroke-width="3.2" fill="none" stroke-linecap="round"/></svg>
<svg class="a" style="left:506px;top:6px" width="34" height="30" viewBox="0 0 34 30"><path d="M1 1H33V8H10V12H28V18H10V22H33V29H1Z" fill="#4a4a4a"/><path d="M3 3H31V6H8V14H26V16H8V24H31V27H3Z" fill="#9a9a9a"/></svg>
<svg class="a" style="left:570px;top:4px" width="32" height="34" viewBox="0 0 32 34"><ellipse cx="14" cy="20" rx="12" ry="10" fill="#e8f0f8" stroke="#7a98b8"/><circle cx="8" cy="20" r="2.3" fill="#e03030"/><circle cx="10" cy="14" r="2.3" fill="#40b040"/><circle cx="16" cy="12" r="2.3" fill="#f0c020"/><circle cx="21" cy="15" r="2" fill="#3070e0"/><circle cx="13" cy="25" r="2" fill="#fff" stroke="#7a98b8"/><path d="M15 32L27 7" stroke="#e09030" stroke-width="2.5"/><path d="M25 8L29 1L30 3L28 9Z" fill="#d0a060"/></svg>
<!-- tray -->
<div class="a" style="left:1066px;top:10px;font-size:11px;color:#fff">EN</div>
<svg class="a" style="left:1097px;top:17px" width="9" height="6"><path d="M0 5.5L4.5 1L9 5.5Z" fill="#fff"/></svg>
<svg class="a" style="left:1117px;top:10px" width="17" height="18" viewBox="0 0 17 18"><path d="M1.5 1V17" stroke="#fff" stroke-width="1.6"/><path d="M2 2Q5 0 8 2T15 2L13 6L15 9Q11 11 8 9T2 9Z" fill="#f0f0f0" stroke="#404040" stroke-width="0.5"/></svg>
<svg class="a" style="left:1141px;top:9px" width="18" height="19" viewBox="0 0 18 19"><path d="M3 1V7M1 3H5" stroke="#fff" stroke-width="1.3"/><rect x="5" y="5" width="12" height="9" fill="#404850" stroke="#f0f0f0" stroke-width="1.2"/><path d="M2 7V17H14" stroke="#fff" stroke-width="1.4" fill="none"/></svg>
<svg class="a" style="left:1165px;top:10px" width="18" height="17" viewBox="0 0 18 17"><path d="M1 6H4L9 1V16L4 11H1Z" fill="#f0f0f0" stroke="#404040" stroke-width="0.5"/><path d="M11 5Q13 8.5 11 12M13.5 3Q16.5 8.5 13.5 14" stroke="#fff" stroke-width="1.2" fill="none"/></svg>
<div class="a" style="left:1213px;top:6px;font-size:11.3px;color:#fff">17:43</div>
<div class="a" style="left:1200px;top:22px;font-size:11.3px;color:#fff;letter-spacing:-0.4px">05.10.2010</div>
<div class="a" style="left:1266px;top:2px;width:14px;height:38px;border-left:1px solid #303840;border-top:1px solid #404850;background:linear-gradient(90deg,#2a3038,#101418)"></div>
</div>
</body></html>
